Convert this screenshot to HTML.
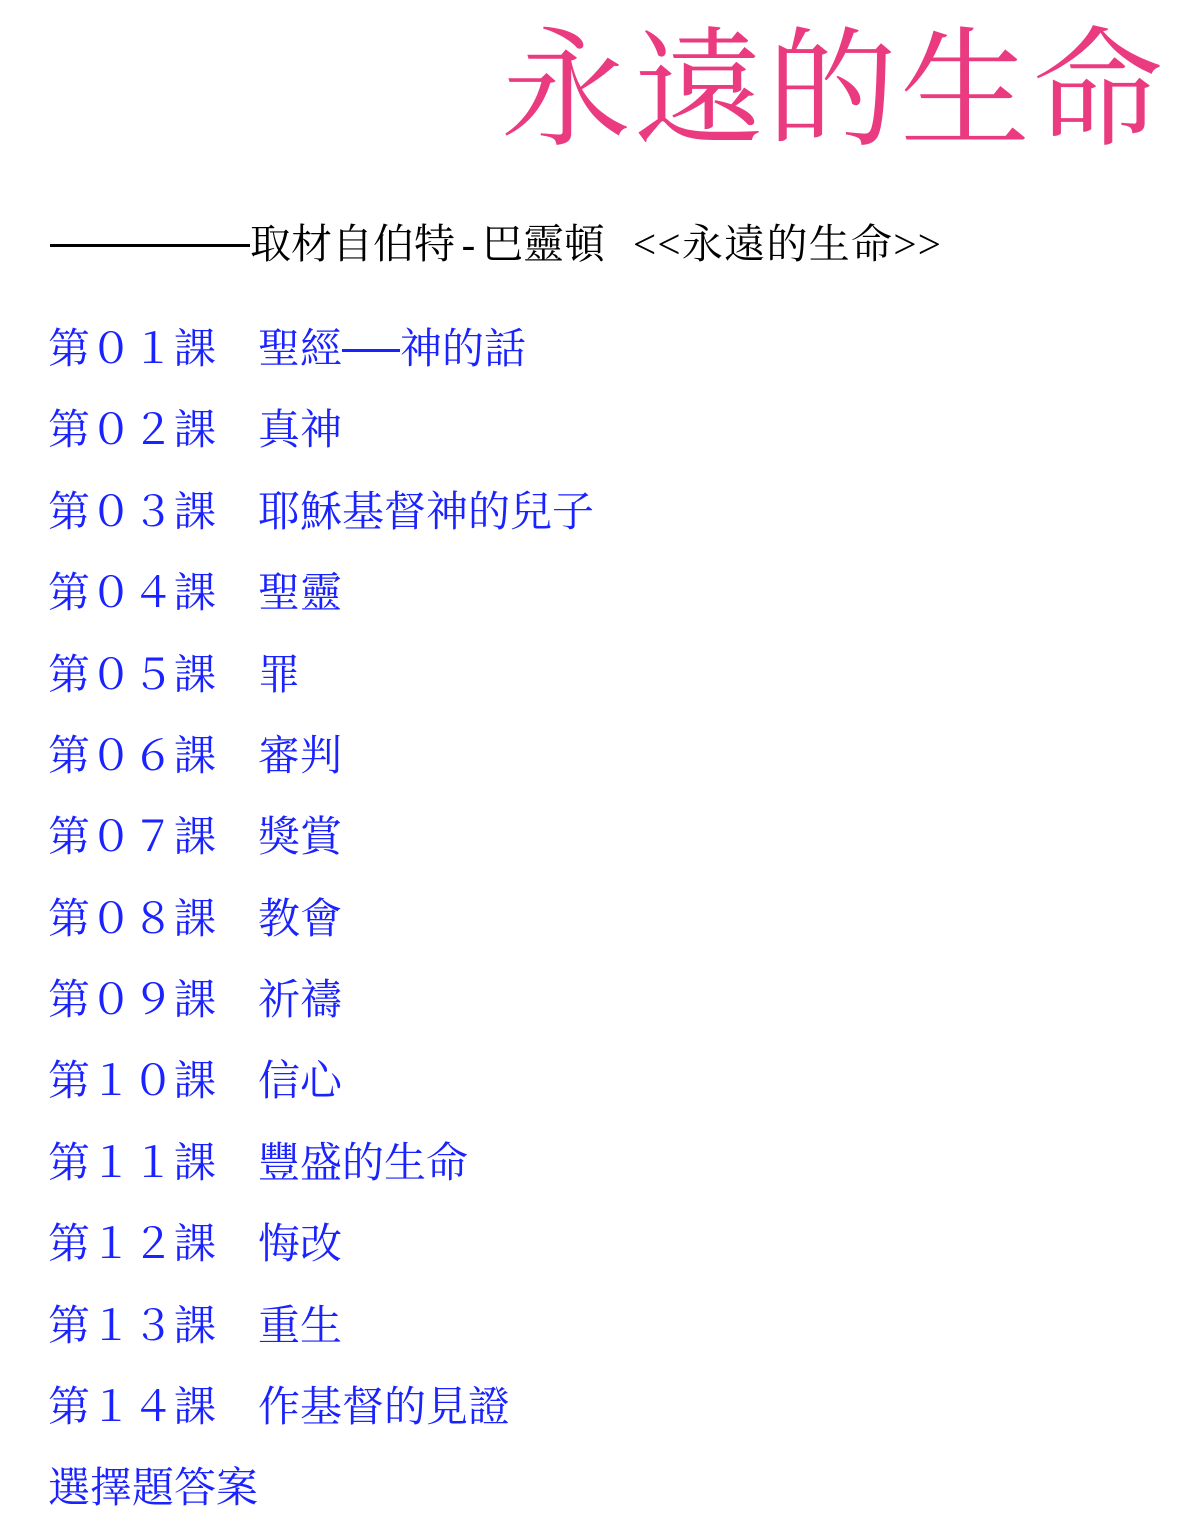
<!DOCTYPE html>
<html><head><meta charset="utf-8"><style>
html,body{margin:0;padding:0;background:#fff;width:1204px;height:1536px;overflow:hidden}
body{position:relative;font-family:"Liberation Serif","Noto Serif CJK SC",serif}
.t{position:absolute;right:38px;top:12px;font-size:130px;line-height:160px;color:#ea3a80;letter-spacing:3px;white-space:nowrap}
.s{position:absolute;left:50px;top:219px;font-size:41px;line-height:50px;color:#000;white-space:nowrap}
.ln{display:inline-block;height:3px;background:#000;vertical-align:middle;position:relative;top:-3px}
.h{display:inline-block;width:27px;text-align:center}
.r{position:absolute;left:48px;font-size:42px;line-height:50px;color:#1a22ff;white-space:nowrap}
.bl{display:inline-block;height:3px;background:#1a22ff;vertical-align:middle;position:relative;top:-3px}
</style></head><body>
<div class="t">永遠的生命</div>
<div class="s"><span class="ln" style="width:200px"></span>取材自伯特<span class="h">-</span>巴靈頓<span style="display:inline-block;width:28px"></span><span style="letter-spacing:1.3px">&lt;&lt;永遠的生命&gt;&gt;</span></div>
<div class="r" style="top:325px">第０１課　聖經<span class="bl" style="width:58px"></span>神的話</div>
<div class="r" style="top:406px">第０２課　真神</div>
<div class="r" style="top:488px">第０３課　耶穌基督神的兒子</div>
<div class="r" style="top:569px">第０４課　聖靈</div>
<div class="r" style="top:651px">第０５課　罪</div>
<div class="r" style="top:732px">第０６課　審判</div>
<div class="r" style="top:813px">第０７課　獎賞</div>
<div class="r" style="top:895px">第０８課　教會</div>
<div class="r" style="top:976px">第０９課　祈禱</div>
<div class="r" style="top:1057px">第１０課　信心</div>
<div class="r" style="top:1139px">第１１課　豐盛的生命</div>
<div class="r" style="top:1220px">第１２課　悔改</div>
<div class="r" style="top:1302px">第１３課　重生</div>
<div class="r" style="top:1383px">第１４課　作基督的見證</div>
<div class="r" style="top:1464px">選擇題答案</div>
</body></html>
